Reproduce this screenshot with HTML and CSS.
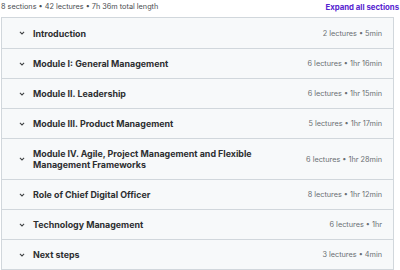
FILE: index.html
```html
<!DOCTYPE html>
<html lang="en">
<head>
  <meta charset="UTF-8" />
  <title>Course content</title>
  <link rel="stylesheet" href="styles.css">
</head>
<body>
  <div class="summary">
    <span>8 sections • 42 lectures • 7h 36m total length</span>
    <span class="expand">Expand all sections</span>
  </div>

  <div class="sections">
    <div class="row">
      <svg class="chev" viewBox="0 0 10 6"><path d="M1.5 1.2 L5 4.6 L8.5 1.2" /></svg>
      <div class="title">Introduction</div>
      <div class="meta">2 lectures • 5min</div>
    </div>
    <div class="row">
      <svg class="chev" viewBox="0 0 10 6"><path d="M1.5 1.2 L5 4.6 L8.5 1.2" /></svg>
      <div class="title">Module I: General Management</div>
      <div class="meta">6 lectures • 1hr 16min</div>
    </div>
    <div class="row">
      <svg class="chev" viewBox="0 0 10 6"><path d="M1.5 1.2 L5 4.6 L8.5 1.2" /></svg>
      <div class="title">Module II. Leadership</div>
      <div class="meta">6 lectures • 1hr 15min</div>
    </div>
    <div class="row">
      <svg class="chev" viewBox="0 0 10 6"><path d="M1.5 1.2 L5 4.6 L8.5 1.2" /></svg>
      <div class="title">Module III. Product Management</div>
      <div class="meta">5 lectures • 1hr 17min</div>
    </div>
    <div class="row tall">
      <svg class="chev" viewBox="0 0 10 6"><path d="M1.5 1.2 L5 4.6 L8.5 1.2" /></svg>
      <div class="title">Module IV. Agile, Project Management and Flexible Management Frameworks</div>
      <div class="meta">6 lectures • 1hr 28min</div>
    </div>
    <div class="row">
      <svg class="chev" viewBox="0 0 10 6"><path d="M1.5 1.2 L5 4.6 L8.5 1.2" /></svg>
      <div class="title">Role of Chief Digital Officer</div>
      <div class="meta">8 lectures • 1hr 12min</div>
    </div>
    <div class="row">
      <svg class="chev" viewBox="0 0 10 6"><path d="M1.5 1.2 L5 4.6 L8.5 1.2" /></svg>
      <div class="title">Technology Management</div>
      <div class="meta">6 lectures • 1hr</div>
    </div>
    <div class="row">
      <svg class="chev" viewBox="0 0 10 6"><path d="M1.5 1.2 L5 4.6 L8.5 1.2" /></svg>
      <div class="title">Next steps</div>
      <div class="meta">3 lectures • 4min</div>
    </div>
  </div>
</body>
</html>
```

FILE: styles.css
```css
* {
  margin: 0;
  padding: 0;
  box-sizing: border-box;
}

body {
  font-family: 'Inter', 'Roboto', sans-serif;
  background: white;
  color: #2d2f31;
  padding: 0 2px 0 1px;
}

.summary {
  display: flex;
  justify-content: space-between;
  align-items: center;
  height: 13px;
  font-size: 7.3px;
  color: #4a4d50;
  margin-bottom: 4px;
}

.expand {
  color: #5624d0;
  font-weight: 700;
  font-size: 7.8px;
  margin-right: -1px;
}

.sections {
  width: 393px;
  border: 1px solid #d1d7dc;
  border-bottom: none;
}

.row {
  display: flex;
  align-items: center;
  height: 30px;
  background: #f7f9fa;
  border-bottom: 1px solid #d1d7dc;
  padding: 0 11px 0 17px;
}

.row:first-child {
  height: 31px;
}

.row.tall {
  height: 41px;
}

.chev {
  width: 6px;
  height: 4px;
  flex-shrink: 0;
  margin-right: 8px;
  fill: none;
  stroke: #3e4143;
  stroke-width: 1.7;
}

.title {
  flex: 1;
  font-size: 8.9px;
  font-weight: 700;
  line-height: 11px;
  padding-right: 20px;
}

.meta {
  font-size: 7.3px;
  color: #6a6f73;
  white-space: nowrap;
}
```
